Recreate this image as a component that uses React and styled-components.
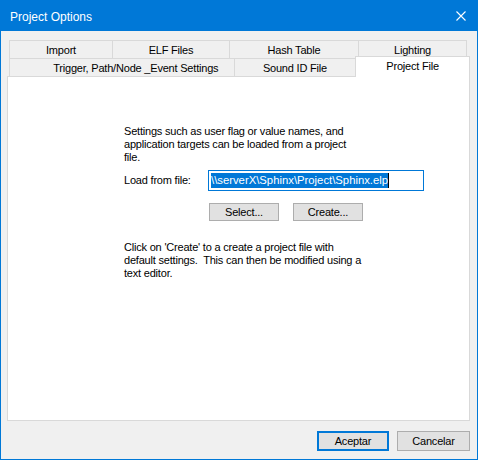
import React from "react";
import styled, { createGlobalStyle } from "styled-components";

const Global = createGlobalStyle`
  html, body { margin: 0; padding: 0; background: #ffffff; }
  * { box-sizing: border-box; }
  body { font-family: "Liberation Sans", Arial, sans-serif; }
`;

const Window = styled.div`
  width: 478px;
  height: 460px;
  border: 1px solid #0078d7;
  display: flex;
  flex-direction: column;
  background: #f0f0f0;
`;

const TitleBar = styled.div`
  height: 30px;
  flex: none;
  background: #0078d7;
  color: #ffffff;
  display: flex;
  align-items: center;
  justify-content: space-between;
  padding: 0 11px 0 9px;
  font-family: "Liberation Sans", Arial, sans-serif;
  font-size: 12px;
`;

const Title = styled.span`
  position: relative;
  top: 1px;
`;

const CloseIcon = styled.svg`
  width: 10px;
  height: 10px;
  display: block;
`;

const Body = styled.div`
  flex: 1;
  display: flex;
  flex-direction: column;
  padding: 9px 7px 8px 6px;
  font-size: 11px;
  letter-spacing: -0.2px;
  color: #000000;
`;

const TabRow = styled.div`
  display: flex;
  height: 18px;
  padding-left: 2px;
  flex: none;
  align-items: flex-end;
`;

const Tab = styled.div`
  width: ${(p) => p.$w}px;
  height: ${(p) => (p.$active ? 21 : 18)}px;
  margin-bottom: ${(p) => (p.$active ? -1 : 0)}px;
  margin-left: ${(p) => (p.$first ? 0 : -1)}px;
  border: 1px solid #d9d9d9;
  border-bottom: none;
  background: ${(p) => (p.$active ? "#ffffff" : "#f0f0f0")};
  position: relative;
  z-index: ${(p) => (p.$active ? 2 : 0)};
  display: flex;
  justify-content: center;
  align-items: ${(p) => (p.$active ? "flex-start" : "center")};
  padding-left: ${(p) => p.$pl || 0}px;
  padding-top: ${(p) => (p.$active ? 3 : 2)}px;
  white-space: nowrap;
  line-height: 13px;
`;

const Panel = styled.div`
  flex: 1;
  border: 1px solid #d9d9d9;
  background: #ffffff;
  display: flex;
  flex-direction: column;
  padding: 48px 0 0 116px;
  position: relative;
  z-index: 1;
`;

const Paragraph = styled.p`
  margin: ${(p) => p.$mt || 0}px 0 0 0;
  line-height: 13px;
  white-space: pre;
`;

const LoadRow = styled.div`
  display: grid;
  grid-template-columns: 84px 216px;
  align-items: center;
  margin-top: 6px;
`;

const Label = styled.span`
  line-height: 13px;
`;

const Input = styled.div`
  height: 21px;
  border: 1px solid #0078d7;
  background: #ffffff;
  display: flex;
  align-items: center;
  padding-left: 2px;
`;

const Selected = styled.span`
  background: #0078d7;
  color: #ffffff;
  font-size: 11.3px;
  letter-spacing: 0;
  line-height: 15px;
  white-space: pre;
`;

const Caret = styled.span`
  width: 1px;
  height: 15px;
  background: #000000;
`;

const ButtonRow = styled.div`
  display: flex;
  gap: 14px;
  margin-top: 12px;
  margin-left: 85px;
`;

const Button = styled.button`
  width: ${(p) => p.$w}px;
  height: ${(p) => p.$h}px;
  border: ${(p) => (p.$default ? "2px solid #0078d7" : "1px solid #adadad")};
  background: #e1e1e1;
  font-family: "Liberation Sans", Arial, sans-serif;
  font-size: 11px;
  letter-spacing: -0.2px;
  color: #000000;
  padding: 0;
  display: flex;
  align-items: center;
  justify-content: center;
`;

const Footer = styled.div`
  display: flex;
  justify-content: flex-end;
  gap: 8px;
  margin-top: 10px;
  flex: none;
`;

const row1 = [
  { label: "Import", w: 104 },
  { label: "ELF Files", w: 118 },
  { label: "Hash Table", w: 130 },
  { label: "Lighting", w: 109 },
];

const row2 = [
  { label: "Trigger, Path/Node _Event Settings", w: 226, pl: 28 },
  { label: "Sound ID File", w: 123 },
  { label: "Project File", w: 115, active: true },
];

export default function App() {
  return (
    <>
      <Global />
      <Window>
        <TitleBar>
          <Title>Project Options</Title>
          <CloseIcon viewBox="0 0 10 10">
            <path d="M0.5 0.5 L9.5 9.5 M9.5 0.5 L0.5 9.5" stroke="#ffffff" strokeWidth="1.1" fill="none" />
          </CloseIcon>
        </TitleBar>
        <Body>
          <TabRow>
            {row1.map((t, i) => (
              <Tab key={t.label} $w={t.w} $first={i === 0}>
                {t.label}
              </Tab>
            ))}
          </TabRow>
          <TabRow>
            {row2.map((t, i) => (
              <Tab key={t.label} $w={t.w} $first={i === 0} $pl={t.pl} $active={t.active}>
                {t.label}
              </Tab>
            ))}
          </TabRow>
          <Panel>
            <Paragraph>
              {"Settings such as user flag or value names, and\napplication targets can be loaded from a project\nfile."}
            </Paragraph>
            <LoadRow>
              <Label>Load from file:</Label>
              <Input>
                <Selected>{"\\\\serverX\\Sphinx\\Project\\Sphinx.elp"}</Selected>
                <Caret />
              </Input>
            </LoadRow>
            <ButtonRow>
              <Button $w={70} $h={18}>Select...</Button>
              <Button $w={70} $h={18}>Create...</Button>
            </ButtonRow>
            <Paragraph $mt={20}>
              {"Click on 'Create' to a create a project file with\ndefault settings.  This can then be modified using a\ntext editor."}
            </Paragraph>
          </Panel>
          <Footer>
            <Button $w={72} $h={20} $default>Aceptar</Button>
            <Button $w={73} $h={20}>Cancelar</Button>
          </Footer>
        </Body>
      </Window>
    </>
  );
}
